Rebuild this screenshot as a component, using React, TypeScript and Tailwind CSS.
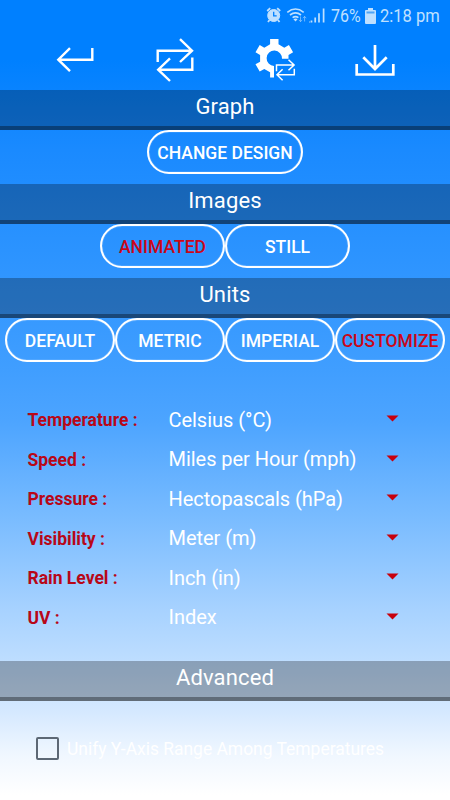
import type { ReactNode } from 'react';

const units = [
  { label: 'Temperature :', value: 'Celsius (°C)' },
  { label: 'Speed :', value: 'Miles per Hour (mph)' },
  { label: 'Pressure :', value: 'Hectopascals (hPa)' },
  { label: 'Visibility :', value: 'Meter (m)' },
  { label: 'Rain Level :', value: 'Inch (in)' },
  { label: 'UV :', value: 'Index' },
];

const StatusBar = () => (
  <div className="flex h-8 items-center pl-[266px] text-[#bfe0ff]">
    <svg width="60" height="18" viewBox="0 0 60 18" fill="none" stroke="currentColor" className="shrink-0">
      {/* alarm */}
      <circle cx="7.7" cy="8.5" r="6" fill="currentColor" strokeWidth="1" />
      <path d="M1.2 4 4.2 1.2M14.2 4l-3-2.8M3.5 13l-1.5 2M12 13l1.5 2" strokeWidth="1.8" />
      <path d="M7.7 4.8v4h3" stroke="#0080ff" strokeWidth="1.3" />
      {/* wifi */}
      <path d="M21.3 5.3q8.2-6.5 16.4 0M24 8q5.5-4.3 11 0M26.6 10.7q2.9-2.2 5.8 0" strokeWidth="1.6" />
      <path d="m27.4 12.2 2.1 2.4 2.1-2.4q-2.1-1.2-4.2 0Z" fill="currentColor" stroke="none" />
      <path d="M34.5 9.5v5m-1.6-1.6 1.6 1.8 1.6-1.8M38.6 14.5v-5M37 11.2l1.6-1.8 1.6 1.8" strokeWidth="1" opacity=".55" />
      {/* signal */}
      <path d="M45.5 15.5v-2M49.2 15.5v-5M53 15.5V6.3M57.6 15.5V1.5" strokeWidth="1.7" />
      <path d="M43.7 15.5v-1" strokeWidth="1" />
    </svg>
    <span className="ml-[5px] w-[30px] origin-left scale-x-[.84] whitespace-nowrap text-[19px]">76%</span>
    <svg className="mx-[3.5px] shrink-0" width="11" height="16" viewBox="0 0 11 16" fill="currentColor">
      <path d="M3 0h5v2h2a1 1 0 0 1 1 1v12a1 1 0 0 1-1 1H1a1 1 0 0 1-1-1V3a1 1 0 0 1 1-1h2Z" />
      <path d="M1.5 3.5h8v2h-8Z" fill="#4fa5f5" />
    </svg>
    <span className="ml-px origin-left scale-x-[.87] whitespace-nowrap text-[19px]">2:18 pm</span>
  </div>
);

const ToolIcon = ({ children, strokeWidth = 2.4 }: { children: ReactNode; strokeWidth?: number }) => (
  <button className="flex w-[100px] justify-center">
    <svg
      width="40"
      height="44"
      viewBox="0 0 40 44"
      fill="none"
      stroke="currentColor"
      strokeWidth={strokeWidth}
      className="overflow-visible"
    >
      {children}
    </svg>
  </button>
);

const Toolbar = () => (
  <div className="flex h-[58px] items-center px-[25px] text-white">
    <ToolIcon>
      <path d="M37.3 9v11.7H3.5M15 9.2 3.3 20.7 15 32.2" />
    </ToolIcon>
    <ToolIcon>
      <path d="M2.7 23V11.7h34M25 .2l12 11.5-12 11.3M37.3 18.5v12.2H3.5M15 19.3 3.2 30.7 15 42" />
    </ToolIcon>
    <ToolIcon strokeWidth={1.5}>
      <path
        d="M15.1 0h8.4v5.3l5.8 3.4L33.9 6l4.2 7.3-4.6 2.6v3.8H27A7.7 7.7 0 1 0 19 27v11.6h-3.9v-5.3l-5.8-3.4-4.6 2.7L.5 25.3l4.6-2.6v-6.8L.5 13.3 4.7 6l4.6 2.7 5.8-3.4Z"
        fill="currentColor"
        stroke="none"
      />
      <path d="M21.5 32.3V26h17M33.5 20.7l5.6 5.3-5.6 5.3M39.3 29.7v6H22.4M27.6 30.3 22 35.7l5.6 5.6" />
    </ToolIcon>
    <ToolIcon strokeWidth={2.7}>
      <path d="M20 6v24M8.3 18.3 20 30 31.7 18.3M1.7 25v10.5h36.6V25" />
    </ToolIcon>
  </div>
);

const SectionHeader = ({ children }: { children: ReactNode }) => (
  <h2 className="h-10 shrink-0 border-b-4 border-black/35 bg-black/28 text-center text-[22px]/[34px] tracking-[.15px] text-white">
    {children}
  </h2>
);

const PillButton = ({ children, active, className }: { children: ReactNode; active?: boolean; className: string }) => (
  <button
    className={`flex h-[44px] items-center justify-center rounded-full border-2 border-white pt-0.5 text-[17.5px] font-medium whitespace-nowrap shadow-[inset_0_0_1px_#fff] ${
      active ? 'text-[#cb0618]' : 'text-white'
    } ${className}`}
  >
    {children}
  </button>
);

const App = () => {
  return (
    <div className="flex h-[800px] w-[450px] flex-col overflow-hidden bg-[linear-gradient(#0080ff_0px,#0080ff_60px,#1a8aff_150px,#2b93ff_250px,#409eff_370px,#4ca4ff_420px,#78bbff_515px,#a7d2ff_610px,#bbdcff_655px,#d4e8ff_710px,#f0f7ff_755px,#ffffff_795px)] font-['Roboto',sans-serif]">
      <StatusBar />
      <Toolbar />

      <SectionHeader>Graph</SectionHeader>
      <div className="flex h-[54px] justify-center">
        <PillButton className="w-[156px]">CHANGE DESIGN</PillButton>
      </div>

      <SectionHeader>Images</SectionHeader>
      <div className="flex h-[54px] justify-center">
        <PillButton className="w-[125px]" active>ANIMATED</PillButton>
        <PillButton className="w-[125px]">STILL</PillButton>
      </div>

      <SectionHeader>Units</SectionHeader>
      <div className="flex justify-center">
        <PillButton className="w-[110px]">DEFAULT</PillButton>
        <PillButton className="w-[110px]">METRIC</PillButton>
        <PillButton className="w-[110px]">IMPERIAL</PillButton>
        <PillButton className="w-[110px]" active>CUSTOMIZE</PillButton>
      </div>

      <div className="mt-[38px] h-[261px]">
        {units.map((unit) => (
          <div key={unit.label} className="flex h-[39.5px] items-center pr-[51px] pl-[27.5px]">
            <span className="w-[141px] pt-px text-[17.5px] font-bold text-[#b80718]">{unit.label}</span>
            <span className="flex-1 text-[20px] tracking-[-.04px] text-white">{unit.value}</span>
            <svg width="13" height="7" viewBox="0 0 13 7" className="mb-0.5 fill-[#c8000c]">
              <path d="M.5.5h12l-6 6Z" />
            </svg>
          </div>
        ))}
      </div>

      <SectionHeader>Advanced</SectionHeader>
      <label className="mt-[34.5px] flex items-center pl-9 text-[17.45px] text-white">
        <span className="mr-2 size-[23px] rounded-[2px] border-2 border-[#5d6875]" />
        Unify Y-Axis Range Among Temperatures
      </label>
    </div>
  );
};

export default App;
